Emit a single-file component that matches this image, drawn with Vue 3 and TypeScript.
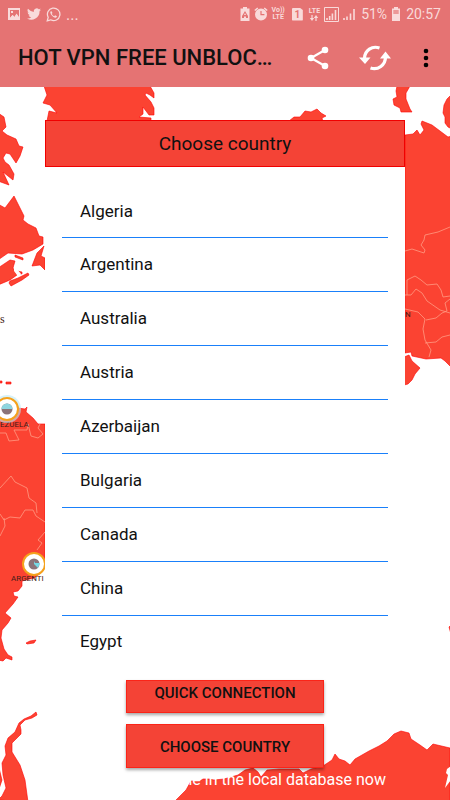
<script setup lang="ts">
const countries: string[] = [
  'Algeria',
  'Argentina',
  'Australia',
  'Austria',
  'Azerbaijan',
  'Bulgaria',
  'Canada',
  'China',
  'Egypt',
]
</script>

<template>
  <div class="screen">
    <header class="top">
      <div class="status">
        <svg class="s-icon" viewBox="0 0 14 14">
          <path fill-rule="evenodd" d="M1 1h12v12H1zM3 3v8l2.500-3 2 2 2-3.500 2.500 3.500V3zM4 4h2v2H4z" fill="currentColor" />
          <path d="M3 11l2.500-3 2 2 2-3 2.500 4z" fill="currentColor" />
        </svg>
        <svg class="s-icon twitter" viewBox="0 0 24 24">
          <path fill="currentColor" d="M23.900 4.600a10 10 0 0 1-2.800.8 5 5 0 0 0 2.200-2.700c-1 .6-2 1-3.100 1.200a4.900 4.900 0 0 0-8.400 4.500A14 14 0 0 1 1.700 3.200a4.900 4.900 0 0 0 1.500 6.500c-.8 0-1.600-.2-2.200-.6v.1a4.900 4.900 0 0 0 3.900 4.800c-.7.2-1.500.2-2.200.1a4.900 4.900 0 0 0 4.600 3.400A9.900 9.900 0 0 1 0 19.500a14 14 0 0 0 21.500-12.400c1-.7 1.800-1.500 2.400-2.500z" />
        </svg>
        <svg class="s-icon whats" viewBox="0 0 24 24">
          <path d="M2 22l1.500-5.500a10 10 0 1 1 4 4z" fill="none" stroke="currentColor" stroke-width="2" />
          <path fill="currentColor" d="M8.500 6.500c-1 .3-2 1.500-1.500 3.200 1 3.300 3.800 6.300 7.500 7.300 1.700.3 3-.8 3-2.300l-3-1.500-1.300 1.500c-2-.8-3.300-2.200-4-3.800l1.200-1.300z" />
        </svg>
        <span class="more">...</span>
        <span class="spacer"></span>
        <svg class="s-icon battery-saver" viewBox="0 0 10 14">
          <path fill="currentColor" fill-rule="evenodd" d="M3 0h4v1.500h2.500V14h-9V1.500H3zM5 4L2 9v2h2V9.500h2V11h2V9zM5 6l1 2H4z" />
        </svg>
        <svg class="s-icon alarm" viewBox="0 0 14 14">
          <path fill="currentColor" fill-rule="evenodd" d="M7 1.500a6 6 0 1 1 0 12 6 6 0 0 1 0-12zM6.400 4v4.200h4V7H7.600V4z" />
          <path d="M.8 3.500l3-2.500M13.200 3.500l-3-2.500" stroke="currentColor" stroke-width="1.600" />
        </svg>
        <span class="stack volte"><span>Vo))</span><span>LTE</span></span>
        <span class="sim">1</span>
        <span class="stack lte">
          <span>LTE</span>
          <svg viewBox="0 0 10 6">
            <path d="M3 0v4M7 6V2" stroke="currentColor" stroke-width="1.200" />
            <path d="M.8 3h4.400L3 6zM4.800 3h4.400L7 0z" fill="currentColor" />
          </svg>
        </span>
        <svg class="s-icon signal" viewBox="0 0 15 15">
          <path d="M.5.5h14v14H.5z" fill="none" stroke="currentColor" />
          <path d="M3 13v-2M5.700 13V9M8.400 13V6.500M11.500 13V3" stroke="currentColor" stroke-width="1.600" />
        </svg>
        <svg class="s-icon signal" viewBox="0 0 15 15">
          <path d="M3 13v-2M6 13V9.500M9.500 13V6.500M13 13V2" stroke="currentColor" stroke-width="1.600" />
        </svg>
        <span class="clock">51%</span>
        <svg class="s-icon battery" viewBox="0 0 10 14">
          <path fill="currentColor" d="M3 0h4v1.500h2V14H1V1.500h2z" />
          <path fill="#e57373" fill-opacity=".65" d="M2.300 3h5.400v4H2.300z" />
        </svg>
        <span class="clock">20:57</span>
      </div>
      <div class="toolbar">
        <h1>HOT VPN FREE UNBLOC…</h1>
        <button class="tool share" type="button" aria-label="Share">
          <svg viewBox="0 0 22 24">
            <path d="M18 4L4 12l14 8" fill="none" stroke="#fff" stroke-width="2.200" />
            <circle cx="18" cy="4" r="3.300" fill="#fff" />
            <circle cx="4" cy="12" r="3.300" fill="#fff" />
            <circle cx="18" cy="20" r="3.300" fill="#fff" />
          </svg>
        </button>
        <button class="tool refresh" type="button" aria-label="Refresh">
          <svg viewBox="0 0 32 26">
            <path d="M5.500 13C6 5 13 .5 20.500 3M26.500 12C26.500 20 19 25.500 11.500 23" fill="none" stroke="#fff" stroke-width="3.200" />
            <path d="M0 12.500h11.500L6 19zM21 13.500h11L26.500 6.500z" fill="#fff" />
          </svg>
        </button>
        <button class="tool menu" type="button" aria-label="More options">
          <svg viewBox="0 0 6 20">
            <circle cx="3" cy="3" r="2.300" />
            <circle cx="3" cy="10" r="2.300" />
            <circle cx="3" cy="17" r="2.300" />
          </svg>
        </button>
      </div>
    </header>

    <main class="stage">
      <svg class="map" viewBox="0 87 450 713" preserveAspectRatio="xMinYMin slice" aria-hidden="true">
        <g class="land">
          <path d="M44 86l3 9-4 8 7 2 7 8-8-2-2 10h104v-3l-12-1 4-3 0-7 6 8h5v-7l-3-6-6-7 1-2 4 2 4 3v-5l-4-7z" />
          <path d="M-2 113l6 4 2 10-4 4 5 4 9 4 3 7 4 1-3 9-4 7-6-9-4-1-3 5 2 4 4 3 5 9-1 6-10-8 6 13-11-4z" />
          <path d="M-2 204l7 4 9-12 10 20-1 4 5 4 8 4 3 8 4 1v7l-10 6-11 4-14-1-10 7z" />
          <path d="M-2 268l12-8 5 1-2 7 4 7-7 5-12 5zM10 281l8-3 10-5 1 2-7 5-11 6-2-3zM44 246l-7 7-5 13 8-1 5 5v-12l-4-2zM15 255l8 3v2l-8-3zM17 271l5 1v2l-5-1zM-1 381h3v2h-3zM6 382h5v2H6z" />
          <path d="M-2 405l20 3 7 1 2-2-1 5 7 6 5 6h7v141l-3 7-8 6-12 3v5l-4 5-5 1 1 4 4 1-5 7-8 9 6 5-3 5-6 7-1 8 3 11 4 6 4 2v3l-6-2-3 3-5-1z" />
          <path d="M26 643l4-2 6-1-2 3-7 1zM449 627l2-2v9z" />
          <path d="M397 86h13l-4 7v6l4 10 2 3-11 0-1-4-6-3-1-6 4-2-1-6zM452 94l-5 5-3 6-1 8 2 4v6l3 4 4 2z" />
          <path d="M405 135l8-1 4-4 3 5 4-5-3-6 1-3 10 4 8 6 8 6 4-1v232l-7-7-4-3-15 1-14-3-1-4-6 1z" />
          <path d="M404 357l5-2 3 6 8 7-5 6-3 6-4 4-4 1zM289 121l5-4h6l5-6 6 1 6-3 4 4 5 3-4 2 1 4z" />
          <path d="M28 802l-3-22-5-15-8-13v-9l9-9v-4l-1-5 5-5 7-2 5-3-1-3-5 4-7 3-5 4-4 9-7 6-3 8 1 9-4 8 1 12 3 13-4 8-4 4zM-1 768l3 12-3 9z" />
          <path d="M175 801l11-11 5-9 3 0 6 0 3-2 6 0 5 1 10-1 14-4 7-5 8-2 5 4 3 5 6-7 12-1h20l4 4 8-4 12-3 9-6 3-6 4 5 6 2 5 4 5-6 14-8 10-5 8-5 7-7 7-3 8 2 2 6 9 6 7 5 6-6 17 4v53z" />
        </g>
        <path class="sea" d="M14 266l3-2v5l4 5-4 1-3-4zM451 766l-4 3-1 4 2 2-3 13 6-8z" />
        <g class="borders">
          <path d="M0 433h6l3 8 10-1-5-10 13 0 1-6 3 12 7 2 5-4-5-6 2-4M0 488l11-12 4 6 12 6 2 10 7 5 1 10M0 514l4 6 6-3 10 1 5-8h8l3 6 9 6M0 536l5-10-1-8M37 550l5-7-4-3 7-8" />
          <path d="M450 227l-12 5-13 3-1 5-3 5 4 5-1 3-12-4-7 2M407 295v-15l8-4 6 4 6 5 10-1 4 6 2 7 7-1M405 295h6l5-6 6 4 5 8 13 9 10 3M405 309l13 3 7 7-2 10 2 11 6 10-2 7M425 343l11-1 6-5 8-2M426 320l10-2 6-5 5-2-2-8 5-4" />
        </g>
        <g class="labels">
          <text x="405" y="317">N</text>
          <text x="0" y="427">EZUELA</text>
          <text x="11" y="581">ARGENTI</text>
          <text class="serif" x="0" y="323">s</text>
        </g>
        <g>
          <circle class="glow" cx="7" cy="409" r="14" />
          <circle class="ring" cx="7" cy="409" r="11" />
          <circle cx="7" cy="409" r="5.500" fill="#8b7478" />
          <path d="M1.500 409a5.500 5.500 0 0 1 11 0z" fill="#8ed5df" />
          <circle class="ring" cx="34" cy="564" r="11" />
          <circle cx="34" cy="564" r="5.500" fill="#8b7478" />
          <path d="M34 564v-3l1 2 5 0-2 5z" fill="#75d9e3" />
        </g>
      </svg>

      <section class="dialog">
        <h2>Choose country</h2>
        <ul>
          <li v-for="country in countries" :key="country">{{ country }}</li>
        </ul>
      </section>

      <div class="actions">
        <button class="action quick" type="button">QUICK CONNECTION</button>
        <button class="action" type="button">CHOOSE COUNTRY</button>
      </div>
      <p class="note">ble in the local database now</p>
    </main>
  </div>
</template>

<style>
body {
  margin: 0;
}
</style>

<style scoped>
.screen {
  min-height: 100vh;
  display: flex;
  flex-direction: column;
  background: #fff;
  color: #111;
  font-family: Roboto, "Liberation Sans", sans-serif;
}
.top {
  background: #e57373;
  height: 87px;
  flex: none;
}
.status {
  display: flex;
  align-items: center;
  height: 28px;
  padding: 0 9px 0 7px;
  color: #f9dada;
}
.s-icon {
  width: 14px;
  height: 14px;
  flex: none;
}
.twitter {
  margin-left: 6px;
}
.whats {
  margin-left: 5px;
  width: 15px;
  height: 15px;
}
.more {
  margin-left: 5px;
  font-size: 16px;
}
.spacer {
  flex: 1;
}
.battery-saver {
  width: 10px;
}
.alarm {
  margin-left: 4px;
}
.stack {
  display: flex;
  flex-direction: column;
  align-items: center;
  font-size: 7px;
  line-height: 7px;
  font-weight: 700;
}
.volte {
  margin-left: 4px;
}
.lte {
  margin: 0 2px 0 6px;
}
.lte svg {
  width: 10px;
  height: 6px;
}
.sim {
  width: 11px;
  height: 13px;
  margin-left: 7px;
  border-radius: 1px;
  background: #f9dada;
  color: #e57373;
  font-size: 10px;
  line-height: 13px;
  font-weight: 700;
  text-align: center;
  clip-path: polygon(0 0, 70% 0, 100% 20%, 100% 100%, 0 100%);
}
.signal {
  width: 15px;
  height: 15px;
  margin-left: 2px;
}
.clock {
  margin-left: 5px;
  font-size: 14px;
}
.battery {
  width: 10px;
  margin-left: 4px;
}
.toolbar {
  display: flex;
  align-items: center;
  height: 59px;
  padding: 0 18px;
}
h1 {
  flex: 1;
  margin: 0;
  font-size: 22px;
  line-height: 28px;
  font-weight: 500;
  white-space: nowrap;
}
.tool {
  display: block;
  flex: none;
  padding: 0;
  border: 0;
  background: none;
}
.tool svg {
  display: block;
  width: 100%;
}
.share {
  width: 22px;
  margin-left: 32px;
}
.refresh {
  width: 32px;
  margin-left: 30px;
}
.menu {
  width: 6px;
  margin: 0 3px 0 32px;
}
.stage {
  position: relative;
  flex: 1;
  display: flex;
  flex-direction: column;
  overflow: hidden;
}
.map {
  position: absolute;
  inset: 0;
  width: 100%;
  height: 100%;
}
.land {
  fill: #fb4332;
  stroke: #f00;
  stroke-width: 0.6;
}
.sea {
  fill: #fff;
}
.borders {
  fill: none;
  stroke: #ff9b83;
  stroke-width: 0.8;
}
.labels {
  font-size: 8px;
  fill: #431c18;
}
.serif {
  font-family: "Liberation Serif", serif;
  font-size: 12px;
}
.glow {
  fill: #bdeaf5;
  fill-opacity: 0.6;
}
.ring {
  fill: #fff;
  stroke: #f5a11c;
  stroke-width: 2;
}
.dialog {
  position: relative;
  margin: 33px 10% 0;
  background: #fff;
}
h2 {
  margin: 0;
  border: 1px solid #f00000;
  background: #f44336;
  font-size: 19px;
  line-height: 45px;
  font-weight: 400;
  text-align: center;
}
ul {
  list-style: none;
  margin: 0;
  padding: 18px 17px 0;
}
li {
  padding-left: 18px;
  border-bottom: 1px solid #1a80fa;
  font-size: 17px;
  line-height: 53px;
}
li:first-child {
  line-height: 52px;
}
li:last-child {
  border-bottom: 0;
  line-height: 50px;
}
.actions {
  position: relative;
  display: flex;
  flex-direction: column;
  gap: 11px;
  width: 44%;
  margin: 14px auto 0;
}
.action {
  height: 44px;
  padding: 2px 0 0;
  border: 1px solid #fb2418;
  background: #f44336;
  box-shadow: 0 2px 3px rgba(0, 0, 0, 0.35);
  color: #111;
  font-family: inherit;
  font-size: 15px;
  line-height: 20px;
  font-weight: 500;
}
.quick {
  height: 33px;
  padding: 0 0 8px;
}
.note {
  position: relative;
  margin: 1px 64px 0 0;
  color: #fff;
  font-size: 16px;
  line-height: 22px;
  text-align: right;
}
</style>
